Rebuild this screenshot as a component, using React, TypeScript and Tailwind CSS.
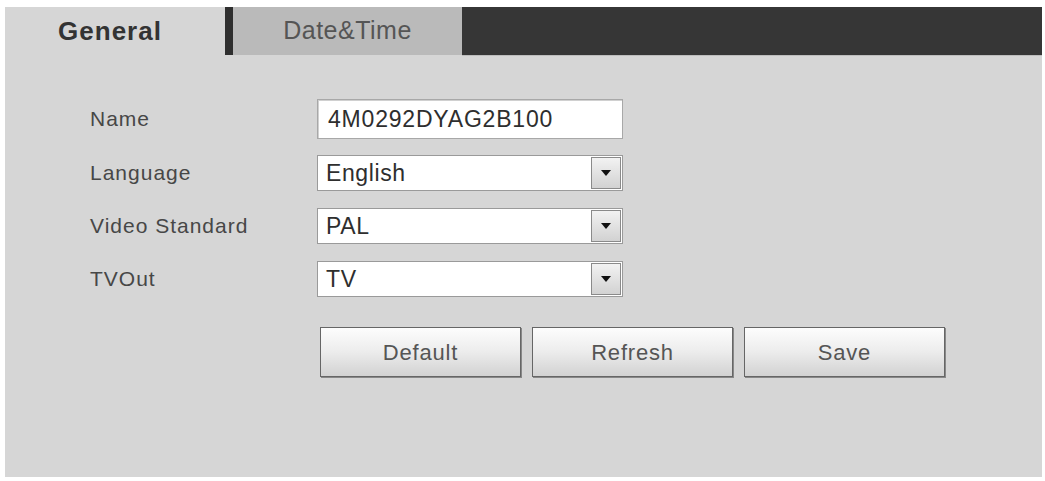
import { useState } from "react";

function SelectBox({ value }: { value: string }) {
  return (
    <div className="flex h-[36px] w-[306px] border border-[#9a9a9a] bg-white">
      <div className="flex flex-1 items-center pl-[8px] text-[23px] tracking-[0.6px] text-[#2e2e2e]">
        {value}
      </div>
      <div className="m-[1px] flex w-[30px] items-center justify-center border border-[#8a8a8a] bg-gradient-to-b from-[#f2f2f2] to-[#d2d2d2]">
        <svg width="10" height="6" viewBox="0 0 10 6">
          <path d="M0 0 L10 0 L5 6 Z" fill="#111" />
        </svg>
      </div>
    </div>
  );
}

function Row({ label, children, className }: { label: string; children: any; className: string }) {
  return (
    <div className={"flex items-center " + className}>
      <div className="w-[227px] text-[21px] tracking-[1px] text-[#474747]">{label}</div>
      {children}
    </div>
  );
}

export default function App() {
  const [tab, setTab] = useState("general");
  const buttons = ["Default", "Refresh", "Save"];

  return (
    <div
      className="h-[481px] w-[1045px] bg-white pb-[4px] pl-[5px] pr-[3px] pt-[7px]"
      style={{ fontFamily: '"Liberation Sans", Arial, sans-serif' }}
    >
      <div className="flex h-full flex-col bg-[#d6d6d6]">
        {/* barra de pestañas */}
        <div className="flex h-[48px]">
          <button
            onClick={() => setTab("general")}
            className="flex w-[220px] items-center justify-center pr-[10px] text-[26px] font-bold tracking-[1px] text-[#333]"
          >
            General
          </button>
          <div className="w-[8px] bg-[#2f2f2f]" />
          <button
            onClick={() => setTab("datetime")}
            className="flex w-[229px] items-center justify-center bg-[#bababa] text-[25px] tracking-[0.5px] text-[#555]"
          >
            Date&amp;Time
          </button>
          <div className="flex-1 bg-[#363636] shadow-[0_1px_0_#bdbdbd]" />
        </div>

        {tab === "general" && (
          <div className="flex flex-col pl-[85px]">
            <Row label="Name" className="mt-[44px] h-[40px]">
              <div className="flex h-[40px] w-[306px] items-center border border-[#a8a8a8] bg-white pl-[10px] text-[23px] tracking-[0.8px] text-[#2e2e2e] shadow-[inset_1px_1px_0_#d0d0d0]">
                4M0292DYAG2B100
              </div>
            </Row>
            <Row label="Language" className="mt-[16px] h-[36px]">
              <SelectBox value="English" />
            </Row>
            <Row label="Video Standard" className="mt-[17px] h-[36px]">
              <SelectBox value="PAL" />
            </Row>
            <Row label="TVOut" className="mt-[17px] h-[36px]">
              <SelectBox value="TV" />
            </Row>

            <div className="ml-[230px] mt-[30px] flex gap-[11px]">
              {buttons.map((b) => (
                <button
                  key={b}
                  className="flex h-[50px] w-[201px] items-center justify-center border border-[#666] bg-gradient-to-b from-[#fdfdfd] via-[#ececec] to-[#d2d2d2] text-[22px] tracking-[0.8px] text-[#555] shadow-[1px_1px_0_#888]"
                >
                  {b}
                </button>
              ))}
            </div>
          </div>
        )}
      </div>
    </div>
  );
}
